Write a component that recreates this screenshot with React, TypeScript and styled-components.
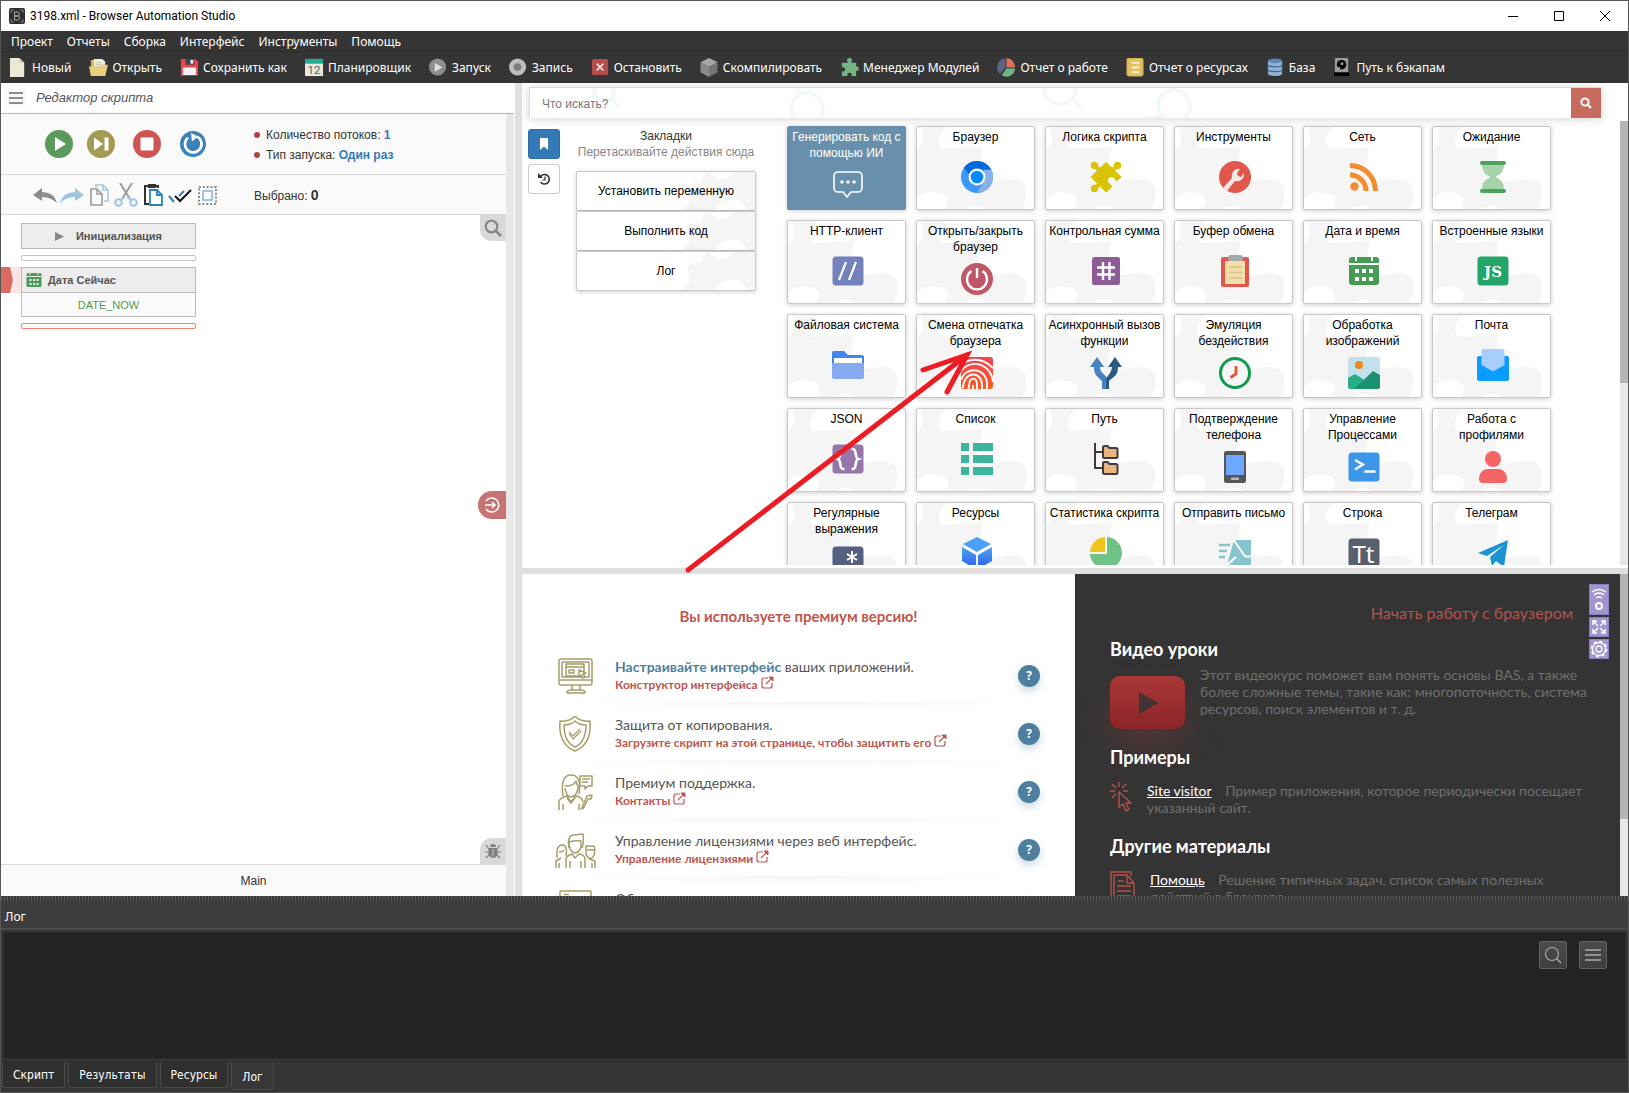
import React from 'react';
import styled, { createGlobalStyle, css } from 'styled-components';

const ui = '"Noto Sans", "Open Sans", sans-serif';
const sans = '"Liberation Sans", Arial, sans-serif';
const lato = 'Lato, sans-serif';

const Global = createGlobalStyle`
  * { box-sizing: border-box; }
  body { margin: 0; background: #353535; }
  button { font: inherit; color: inherit; padding: 0; border: 0; background: none; cursor: pointer; }
  svg { display: block; flex: none; }
  h1, h2, p, ul { margin: 0; padding: 0; }
  ul { list-style: none; }
`;

/* ---------- window frame ---------- */

const Window = styled.div`
  position: relative;
  height: 100vh;
  display: flex;
  flex-direction: column;
  overflow: hidden;
  border: 1px solid #565656;
  background: #353535;
  font-family: ${sans};
  font-size: 12px;
`;
const TitleBar = styled.header`
  flex: none;
  height: 30px;
  display: flex;
  align-items: center;
  padding-left: 8px;
  background: #fff;
  color: #000;
`;
const WindowTitle = styled.h1`
  flex: 1;
  margin-left: 5px;
  font: 400 12px/16px Roboto, ${ui};
`;
const FrameButton = styled.button`
  width: 46px;
  height: 30px;
  display: grid;
  place-items: center;
`;
const MenuBar = styled.nav`
  flex: none;
  height: 21px;
  display: flex;
  align-items: center;
  gap: 14px;
  padding: 2px 0 0 10px;
  border-bottom: 1px solid #2c2c2c;
  color: #fff;
  font: 12px/18px ${ui};
`;
const ToolBar = styled.div`
  flex: none;
  height: 31px;
  display: flex;
  align-items: center;
  gap: 18px;
  padding-left: 8px;
  color: #fff;
  font: 12px/18px ${ui};
`;
const ToolButton = styled.button`
  display: flex;
  align-items: center;
  gap: 4px;
  white-space: nowrap;
`;
const Workspace = styled.main`
  position: relative;
  flex: 1;
  min-height: 0;
  display: flex;
  background: #fff;
`;

/* ---------- script editor ---------- */

const EditorPanel = styled.section`
  flex: none;
  width: 514px;
  display: flex;
  flex-direction: column;
  padding-right: 1px;
  color: #333;
`;
const EditorHeader = styled.div`
  flex: none;
  height: 31px;
  display: flex;
  align-items: center;
  gap: 10px;
  padding-left: 5px;
  border-bottom: 1px solid #b5b5b5;
  font: italic 13px/20px ${sans};
  color: #555;
`;
const Burger = styled.button`
  width: 20px;
  height: 20px;
  display: grid;
  place-items: center;
  background: #fafafa;
`;
const EditorBody = styled.div`
  position: relative;
  flex: 1;
  min-height: 0;
  display: flex;
  flex-direction: column;
  border-right: 8px solid #e8e8e8;
`;
const ControlRow = styled.div<{ $tall?: boolean }>`
  flex: none;
  height: ${(p) => (p.$tall ? 61 : 40)}px;
  display: grid;
  grid-template-columns: 253px 1fr;
  align-items: center;
  background: #fafafa;
  border-bottom: 1px solid #d9d9d9;
`;
const RunButtons = styled.div`
  display: flex;
  align-items: center;
  gap: 18px;
  padding-left: 44px;
`;
const RunPair = styled.div`
  display: flex;
  gap: 14px;
`;
const EditButtons = styled.div`
  display: flex;
  gap: 3px;
  padding-left: 32px;
`;
const IconButton = styled.button`
  display: grid;
  place-items: center;
`;
const RunInfo = styled.ul`
  padding-top: 2px;
  line-height: 20px;
`;
const RunInfoItem = styled.li`
  display: flex;
  align-items: center;
  gap: 6px;
  &::before {
    content: '';
    width: 6px;
    height: 6px;
    border-radius: 50%;
    background: #b0413e;
  }
  b { color: #337ab7; }
`;
const Selected = styled.div`
  b { font-size: 14px; }
`;
const Canvas = styled.div`
  position: relative;
  flex: 1;
  min-height: 0;
  padding: 8px 0 0 20px;
  background: #fff;
`;
const Block = styled.div`
  width: 175px;
  border: 1px solid #bcbcbc;
  background: #ededed;
  color: #555;
`;
const BlockHead = styled.div<{ $center?: boolean }>`
  height: 24px;
  display: flex;
  align-items: center;
  ${(p) => (p.$center ? css`justify-content: center; gap: 12px;` : css`padding-left: 4px; gap: 6px;`)}
  font-weight: 700;
  font-size: 11px;
`;
const BlockBody = styled.div`
  height: 24px;
  border-top: 1px solid #bcbcbc;
  background: #fafafa;
  color: #4f9a52;
  text-align: center;
  font-size: 11px;
  line-height: 24px;
`;
const DropLine = styled.div<{ $active?: boolean }>`
  width: 175px;
  height: 6px;
  margin: 6px 0;
  border: 1px solid ${(p) => (p.$active ? '#f28076' : '#c4c4c4')};
  border-radius: 2px;
  background: #fff;
`;
const MarkedRow = styled.div`
  display: flex;
  margin-left: -20px;
`;
const Marker = styled.div`
  width: 20px;
  height: 26px;
  background: #f9e6e4;
`;
const SideTab = styled.button<{ $at: 'top' | 'middle' | 'bottom' }>`
  position: absolute;
  right: 0;
  display: grid;
  place-items: center;
  width: 26px;
  height: 26px;
  background: #d9d9d9;
  ${(p) => p.$at === 'top' && css`top: 0; border-bottom-left-radius: 12px;`}
  ${(p) => p.$at === 'bottom' && css`bottom: 0; border-top-left-radius: 12px;`}
  ${(p) => p.$at === 'middle' && css`
    top: calc(50% - 14px);
    width: 28px;
    height: 28px;
    background: #c77374;
    border-radius: 14px 0 0 14px;
  `}
`;
const FunctionBar = styled.button`
  flex: none;
  height: 32px;
  border-top: 1px solid #d9d9d9;
  background: #fafafa;
  text-align: center;
`;
const Splitter = styled.div<{ $horizontal?: boolean }>`
  flex: none;
  background: #e0e0e0;
  ${(p) => (p.$horizontal ? css`height: 6px;` : css`width: 7px;`)}
`;

/* ---------- action catalogue ---------- */

const RightSide = styled.div`
  flex: 1;
  min-width: 0;
  display: flex;
  flex-direction: column;
`;
const Catalogue = styled.section`
  flex: 484 1 0;
  min-height: 0;
  display: flex;
  flex-direction: column;
  padding-bottom: 3px;
  background: #fff;
`;
const SearchForm = styled.form`
  position: relative;
  z-index: 1;
  flex: none;
  display: flex;
  height: 31px;
  margin: 4px 27px 0 7px;
  border-top: 1px solid #dcdcdc;
  border-left: 1px solid #dcdcdc;
  background: #fff;
  box-shadow: 0 1px 10px rgba(0, 0, 0, 0.18);
`;
const SearchArt = styled.svg`
  position: absolute;
  inset: 0;
  pointer-events: none;
`;
const SearchInput = styled.input`
  position: relative;
  flex: 1;
  min-width: 0;
  padding: 2px 12px 0;
  border: 0;
  outline: 0;
  background: transparent;
  font: 12px ${sans};
  &::placeholder { color: #777; opacity: 1; }
`;
const SearchButton = styled.button`
  position: relative;
  width: 30px;
  display: grid;
  place-items: center;
  background: #c76b5f;
`;
const CatalogueBody = styled.div`
  flex: 1;
  min-height: 0;
  display: flex;
  padding-top: 3px;
  overflow: hidden;
`;
const SideModes = styled.div`
  flex: none;
  display: flex;
  flex-direction: column;
  gap: 5px;
  padding: 8px 0 0 6px;
`;
const ModeButton = styled.button<{ $on?: boolean }>`
  width: 32px;
  height: 30px;
  display: grid;
  place-items: center;
  border: 1px solid ${(p) => (p.$on ? '#2e6da4' : '#ccc')};
  border-radius: 3px;
  background: ${(p) => (p.$on ? '#337ab7' : '#fff')};
`;
const Bookmarks = styled.div`
  flex: none;
  width: 180px;
  margin: 7px 31px 0 16px;
  text-align: center;
  white-space: nowrap;
  line-height: 16px;
  color: #333;
`;
const Hint = styled.p`
  display: flex;
  justify-content: center;
  color: #888;
`;
const BookmarkList = styled.div`
  margin-top: 11px;
`;
const BookmarkItem = styled.button`
  position: relative;
  display: block;
  width: 180px;
  height: 40px;
  border: 1px solid #c8c8c8;
  border-radius: 2px;
  background: #fff;
  color: #000;
  box-shadow: 0 1px 4px rgba(0, 0, 0, 0.2);
`;
const Tiles = styled.div`
  flex: 1;
  align-self: flex-start;
  display: grid;
  grid-template-columns: repeat(auto-fill, 119px);
  grid-auto-rows: 84px;
  gap: 10px;
  padding-top: 5px;
`;
const Tile = styled.button<{ $accent?: boolean }>`
  position: relative;
  display: flex;
  flex-direction: column;
  align-items: center;
  padding: 2px 0 1px;
  border: 1px solid ${(p) => (p.$accent ? '#688fab' : '#c8c8c8')};
  border-radius: 2px;
  background: ${(p) => (p.$accent ? '#688fab' : '#fff')};
  color: ${(p) => (p.$accent ? '#fff' : '#000')};
  box-shadow: 0 1px 5px rgba(0, 0, 0, 0.2);
`;
const Backdrop = styled.svg`
  position: absolute;
  inset: 0;
  width: 100%;
  height: 100%;
`;
const TileName = styled.span`
  position: relative;
  line-height: 16px;
  text-align: center;
  white-space: pre-line;
`;
const TileIcon = styled.span`
  position: relative;
  flex: 1;
  display: flex;
  align-items: center;
  padding-left: 2px;
`;
const ScrollTrack = styled.div<{ $thumb: number }>`
  flex: none;
  width: 8px;
  background: linear-gradient(#b5b5b5 ${(p) => p.$thumb}%, #e8e8e8 ${(p) => p.$thumb}%);
`;

/* ---------- start page ---------- */

const StartPage = styled.section`
  flex: 323 1 0;
  min-height: 0;
  display: grid;
  grid-template: minmax(0, 1fr) / minmax(0, 553fr) minmax(0, 545fr) 8px;
  overflow: hidden;
`;
const Premium = styled.div`
  overflow: hidden;
  padding: 32px 35px 0;
  background: #fff;
  font-family: ${lato};
`;
const PremiumTitle = styled.h2`
  margin-bottom: 18px;
  text-align: center;
  font: 700 15px/20px ${lato};
  color: #c0554d;
`;
const Feature = styled.div`
  height: 58px;
  display: grid;
  grid-template-columns: 36px 1fr 22px;
  column-gap: 22px;
  align-items: center;
  justify-items: center;
  padding-top: 6px;
  color: #555;
  font-size: 14px;
  line-height: 18px;
  background: radial-gradient(50% 8px at 50% 0, rgba(0, 0, 0, 0.04), transparent);
  &:first-of-type { background: none; }
`;
const FeatureText = styled.div`
  justify-self: stretch;
  padding-bottom: 2px;
  b { color: #4f7f9f; }
`;
const FeatureLink = styled.a`
  display: flex;
  gap: 3px;
  font-weight: 700;
  font-size: 12px;
  line-height: 17px;
  color: #c0554d;
  text-decoration: none;
`;
const HelpButton = styled.button`
  width: 22px;
  height: 22px;
  border-radius: 50%;
  background: #4f7f9f;
  box-shadow: 0 4px 8px rgba(79, 127, 159, 0.3);
  color: #fff;
  font: 700 12px/22px "Open Sans", sans-serif;
`;
const Learn = styled.div`
  position: relative;
  overflow: hidden;
  padding: 29px 25px 0 35px;
  background: #343434;
  color: #6f6f6f;
  font: 14px/17px ${lato};
`;
const StartLink = styled.a`
  display: block;
  margin: 0 22px 15px 0;
  text-align: right;
  font-size: 16px;
  line-height: 20px;
  color: #b5524b;
  text-decoration: none;
`;
const LearnTitle = styled.h2`
  position: relative;
  z-index: 1;
  font: 700 18px/22px ${lato};
  color: #fff;
`;
const VideoRow = styled.div`
  display: flex;
  align-items: flex-start;
  gap: 15px;
  height: 62px;
  margin: 6px 0 18px;
`;
const VideoButton = styled.button`
  flex: none;
  width: 75px;
  height: 53px;
  margin-top: 10px;
  display: grid;
  place-items: center;
  border-radius: 10px;
  background: linear-gradient(#aa3836, #8a2528);
  box-shadow: 0 20px 36px rgba(170, 56, 54, 0.25);
`;
const LearnItem = styled.div`
  display: flex;
  align-items: flex-start;
  gap: 15px;
  margin: 14px 0 19px;
  a { margin-right: 10px; color: #fff; }
`;
const BrowserTools = styled.div`
  position: absolute;
  top: 10px;
  right: 11px;
  display: flex;
  flex-direction: column;
  gap: 2px;
`;
const BrowserTool = styled.button<{ $tall?: boolean }>`
  width: 20px;
  height: ${(p) => (p.$tall ? 31 : 20)}px;
  display: grid;
  place-items: center;
  background: #a294cf;
  border: 1px solid #8d7fc0;
`;

/* ---------- log ---------- */

const DockHandle = styled.div`
  flex: none;
  height: 5px;
  background: repeating-linear-gradient(90deg, #5a5a5a 0 1px, #383838 1px 3px);
`;
const LogTitle = styled.h2`
  flex: none;
  height: 29px;
  padding: 6px 4px 0;
  border-bottom: 2px solid #4b4b4b;
  background: #3d3d3d;
  color: #fff;
  font: 12px/20px ${ui};
`;
const LogView = styled.div`
  flex: none;
  height: 127px;
  margin: 2px;
  display: flex;
  justify-content: flex-end;
  align-items: flex-start;
  gap: 12px;
  padding: 8px 18px;
  border: 1px solid #2c2c2c;
  background: #232323;
`;
const LogButton = styled.button`
  width: 28px;
  height: 28px;
  display: grid;
  place-items: center;
  border: 1px solid #626262;
  border-radius: 2px;
  background: linear-gradient(#4c4c4c, #3e3e3e);
`;
const Tabs = styled.div`
  flex: none;
  height: 31px;
  display: flex;
  align-items: flex-start;
  gap: 3px;
  padding: 0 1px;
  border-top: 1px solid #2c2c2c;
  color: #fff;
  font: 12px/24px "DejaVu Sans Condensed", ${ui};
`;
const Tab = styled.button<{ $on?: boolean }>`
  height: ${(p) => (p.$on ? 28 : 26)}px;
  padding: ${(p) => (p.$on ? '2px 10px 0' : '0 10px')};
  border: 1px solid #4a4a4a;
  border-top: 0;
  border-radius: 0 0 3px 3px;
  background: ${(p) => (p.$on ? '#373737' : '#2f2f2f')};
`;
const Arrow = styled.svg`
  position: absolute;
  left: 679px;
  top: 260px;
  pointer-events: none;
`;

/* ---------- toolbar icons (20 × 20) ---------- */

const Ico = ({ s = 20, w = s, box = 20, children }: { s?: number; w?: number; box?: number; children: React.ReactNode }) => (
  <svg width={w} height={s} viewBox={`0 0 ${(box * w) / s} ${box}`} fill="none" aria-hidden="true">{children}</svg>
);
const gear = 'M8 4a2.500 2.500 0 1 1 4 0v1h5v4a2.300 2.300 0 1 1 0 4.500V19h-5a2.300 2.300 0 1 0-4 0H2v-5a2.300 2.300 0 1 0 0-4V5h6z';
const tools: [string, React.ReactNode][] = [
  ['Новый', <><path d="M1 0h10l5 5v15H1z" fill="#ece8d6" /><path d="M11 0v5h5z" fill="#cfc9ad" /></>],
  ['Открыть', <><path d="M2 2h5l2 2h8v15H2z" fill="#d3b45f" /><path d="M5 1h9l3 3v12H5z" fill="#efecdc" /><path d="M7 5h6M7 7h7M7 9h7" stroke="#c8c2a4" /><path d="M0 9h13l2-2h5l-3 12H2z" fill="#e9cf7c" /></>],
  ['Сохранить как', <><path d="M1 1h15l3 3v15H1z" fill="#ef4343" /><path d="M6 1h9v6H6z" fill="#33475b" /><path d="M11 2h3v4h-3z" fill="#eee" /><path d="M3 10h14v8H3z" fill="#f6f1f1" /><path d="M1 18h18v1H1z" fill="#c02f2f" /></>],
  ['Планировщик', <><path d="M0 1h19v18H0z" fill="#e9e7d8" /><path d="M0 1h19v5H0z" fill="#1fae92" /><text x="9.5" y="17" textAnchor="middle" fontFamily="Roboto" fontSize="12" fill="#56646f">12</text></>],
  ['Запуск', <><circle cx="9" cy="9.500" r="9" fill="#8f8f8f" /><path d="M6 5l8 5-8 4.500z" fill="#ddd" /></>],
  ['Запись', <><circle cx="9" cy="9.500" r="9" fill="#bdbdbd" /><circle cx="9" cy="9.500" r="4" fill="#7d7d7d" /></>],
  ['Остановить', <><rect x="1" y="1" width="17" height="17" rx="2" fill="#b64b4c" /><path d="M6 6l7 7M13 6l-7 7" stroke="#eedada" strokeWidth="2" /></>],
  ['Скомпилировать', <><path d="M9.500 0l9 4.500-9 5-9-5z" fill="#a6a6a6" /><path d="M.5 4.500l9 5V20l-9-5z" fill="#8b8b8b" /><path d="M18.500 4.500l-9 5V20l9-5z" fill="#757575" /></>],
  ['Менеджер Модулей', <path d={gear} fill="#72b583" />],
  ['Отчет о работе', <><path d="M9 10V0a10 10 0 0 0-6 17z" fill="#5c6380" /><path d="M10 0a9 10 0 0 1 9 10h-9z" fill="#e0705a" /><path d="M10 11h9a9 9 0 0 1-14 7z" fill="#6fb584" /></>],
  ['Отчет о ресурсах', <><rect x="1" y="0" width="17" height="19" rx="2" fill="#e3c062" stroke="#c9a94f" /><path d="M6 5h8M6 10h8M6 15h8" stroke="#f8efcf" strokeWidth="2" /></>],
  ['База', <><path d="M2 3v13c0 4 15 4 15 0V3z" fill="#8fb1d3" /><ellipse cx="9.500" cy="3" rx="7.500" ry="2.500" fill="#5e87b3" /><path d="M2 7c0 3 15 3 15 0M2 12c0 3 15 3 15 0" stroke="#3f6289" strokeWidth="1.300" /></>],
  ['Путь к бэкапам', <><rect x="2" y="0" width="14" height="19" rx="1" fill="#9a9a9a" /><path d="M1 15h16v4H1z" fill="#000" /><circle cx="9" cy="7" r="5" fill="#000" /><circle cx="9.500" cy="6" r="1.500" fill="#9a9a9a" /><path d="M4 9l4 1-2 5-2-1z" fill="#9a9a9a" /></>],
];

/* ---------- catalogue icons (32 × 32) ---------- */

const Badge = ({ fill, y = 1.5, children }: { fill: string; y?: number; children: React.ReactNode }) => (
  <><rect x="0.500" y={y} width="31" height={32 - 2 * y} rx="3.500" fill={fill} />{children}</>
);
const glyph = { fill: '#fff', textAnchor: 'middle' as const };

const tiles: [string, React.ReactNode][] = [
  ['Генерировать код с\nпомощью ИИ', <g stroke="#fff" strokeWidth="1.600"><path d="M6 3h20a4 4 0 0 1 4 4v12a4 4 0 0 1-4 4h-7l-4 5-4-5H6a4 4 0 0 1-4-4V7a4 4 0 0 1 4-4z" /><g fill="#fff" stroke="none"><circle cx="10" cy="13" r="1.800" /><circle cx="16" cy="13" r="1.800" /><circle cx="22" cy="13" r="1.800" /></g></g>],
  ['Браузер', <><circle cx="16" cy="16" r="16" fill="#3a99fb" /><path d="M16 0A16 16 0 0 1 30 8.500H16L8.500 14 3 6.500A16 16 0 0 1 16 0z" fill="#0069da" /><path d="M30.500 9A16 16 0 0 1 16 32l7-12V9z" fill="#86b1ea" /><circle cx="16" cy="16" r="8.500" fill="#fff" /><circle cx="16" cy="16" r="6.300" fill="#0587ff" /></>],
  ['Логика скрипта', <g fill="#dac206"><path d="M5 5l7 6M27 5l-7 6M5 27l7-6" stroke="#dac206" strokeWidth="4" /><circle cx="4.500" cy="4.500" r="3.700" /><circle cx="27.500" cy="4.500" r="3.700" /><circle cx="4.500" cy="27.500" r="3.700" /><path d="M16 1.500L22 7l4 4 5 5-4.500 4-1.700-2.500a4 4 0 1 0-4.500 6l1.700 2L16 31l-5.500-5.500L6 21l-5-5 5-5 4.500-4z" stroke="#dac206" strokeLinejoin="round" /></g>],
  ['Инструменты', <><circle cx="16" cy="16" r="16" fill="#e2574c" /><path d="M4 27l9-10a7 7 0 0 1 8-9l-3 4 1 3 3 1 3-4a7 7 0 0 1-9 8L8 30z" fill="#efe9e6" /></>],
  ['Сеть', <g stroke="#f28d2f" strokeWidth="5"><path d="M2 4.500a25.500 25.500 0 0 1 25.500 25.500M2 14a16 16 0 0 1 16 16" /><circle cx="6.500" cy="25.500" r="4.200" fill="#f28d2f" stroke="none" /></g>],
  ['Ожидание', <><path d="M5 3h22c0 8-4 11-8 12.500v1c4 1.500 8 4.500 8 12.500H5c0-8 4-11 8-12.500v-1C9 14 5 11 5 3z" fill="#a7d3aa" /><path d="M5 2h22M5 30h22" stroke="#4fa25c" strokeWidth="4" strokeLinecap="round" /></>],
  ['HTTP-клиент', <Badge fill="#7381bd"><path d="M7 25L14 7M17 25l7-18" stroke="#fff" strokeWidth="2.200" /></Badge>],
  ['Открыть/закрыть\nбраузер', <><circle cx="16" cy="16" r="16" fill="#c05766" /><path d="M10.500 8a10 10 0 1 0 11 0M16 5v10" stroke="#fff" strokeWidth="2.400" /></>],
  ['Контрольная сумма', <><rect x="2" y="2" width="28" height="28" rx="2.500" fill="#8d5b96" /><path d="M13 7v18M19.500 7v18M7 12.500h18M7 19.500h18" stroke="#fff" strokeWidth="2.400" /></>],
  ['Буфер обмена', <><rect x="2" y="2" width="28" height="30" rx="2" fill="#e2574c" /><path d="M6 6h20v23H6z" fill="#f2dfa9" /><rect x="9" y="0" width="15" height="6" rx="2.500" fill="#a6a9ab" /><path d="M10 12h13M10 17.500h13M10 23h13" stroke="#d9c28c" strokeWidth="1.600" /></>],
  ['Дата и время', <><path d="M1 8V5a3 3 0 0 1 3-3h3v4h2V2h14v4h2V2h3a3 3 0 0 1 3 3v3zM1 10h30v17a3 3 0 0 1-3 3H4a3 3 0 0 1-3-3z" fill="#479b55" /><g fill="#fff"><path d="M7 14h4v4H7zM14 14h4v4h-4zM21 14h4v4h-4zM7 22h4v4H7zM14 22h4v4h-4zM21 22h4v4h-4z" /></g></>],
  ['Встроенные языки', <Badge fill="#22a567"><text x="16" y="21.500" {...glyph} fontFamily="DejaVu Serif" fontWeight="700" fontSize="15">JS</text></Badge>],
  ['Файловая система', <><path d="M0 4a2 2 0 0 1 2-2h10l4 4h14a2 2 0 0 1 2 2v8H0z" fill="#4285eb" /><path d="M2 9h28v8H2z" fill="#fff" /><path d="M0 14h32v14a2 2 0 0 1-2 2H2a2 2 0 0 1-2-2z" fill="#86aaee" /></>],
  ['Смена отпечатка\nбраузера', <><defs><linearGradient id="fp" x2="0" y2="1"><stop stopColor="#ef4652" /><stop offset="1" stopColor="#fb5a1f" /></linearGradient><clipPath id="fpc"><rect width="32" height="32" rx="3" /></clipPath></defs><g clipPath="url(#fpc)"><path d="M0 0h32v32H0z" fill="url(#fp)" /><g stroke="#fff" strokeWidth="1.900"><path d="M0 7Q18-3 32 11" /><path d="M0 14Q8 4 20 8q11 5 12 17" /><path d="M0 23c5-15 26-12 26 4v6" /><path d="M2 31c1-18 19-17 19-3v5" /><path d="M7 33c1-2 1-3 1-5 1-9 8-8 8 0v5" /><path d="M12 33v-5" /></g></g></>],
  ['Асинхронный вызов\nфункции', <><path d="M7 0l7 10h-4c0 7 6 6 9 15v7h-7v-8C7 19 4 18 4 10H0z" fill="#4583c4" /><path d="M25 0l7 10h-4c0 9-4 9-9 14v8h-3v-8c-1-4 5-6 6-14h-4z" fill="#2b5a86" /></>],
  ['Эмуляция\nбездействия', <><circle cx="16" cy="16" r="14.500" fill="#f5f5f5" stroke="#119a4d" strokeWidth="3" /><path d="M17 9v8l-5.500 3.500" stroke="#dd5436" strokeWidth="2.800" /></>],
  ['Обработка\nизображений', <><rect width="32" height="32" rx="3" fill="#c3e1ed" /><circle cx="11" cy="8" r="4" fill="#ee8a18" /><path d="M0 21l7-4 8 5v10H2a2 2 0 0 1-2-2z" fill="#27ae89" /><path d="M6 32l19-18 7 4v12a2 2 0 0 1-2 2z" fill="#1c9171" /></>],
  ['Почта', <><path d="M0 9a2 2 0 0 1 2-2h28a2 2 0 0 1 2 2v21a2 2 0 0 1-2 2H2a2 2 0 0 1-2-2z" fill="#0a9dff" /><path d="M4.500 2a2 2 0 0 1 2-2h19a2 2 0 0 1 2 2v14L16 22.500 4.500 16z" fill="#a7ceff" /></>],
  ['JSON', <Badge fill="#9675ab"><path d="M12.500 6H11c-4 0-1.500 9-5 10 3.500 1 1 10 5 10h1.500M19.500 6H21c4 0 1.500 9 5 10-3.500 1-1 10-5 10h-1.500" stroke="#fff" strokeWidth="2.600" /></Badge>],
  ['Список', <path d="M0 0h8v8H0zM12 0h20v8H12zM0 12h8v8H0zM12 12h20v8H12zM0 24h8v8H0zM12 24h20v8H12z" fill="#3cb59d" />],
  ['Путь', <g stroke="#423840" strokeWidth="2" strokeLinejoin="round"><path d="M5 0v25h8M5 9h8" /><path d="M13 4.500q0-1.500 1.500-1.500h3l2 2H26q1.500 0 1.500 1.500v7q0 1.500-1.500 1.500H14.500q-1.500 0-1.500-1.500zM13 20.500q0-1.500 1.500-1.500h3l2 2H26q1.500 0 1.500 1.500v7q0 1.500-1.500 1.500H14.500q-1.500 0-1.500-1.500z" fill="#e9b47e" /></g>],
  ['Подтверждение\nтелефона', <><rect x="5" width="22" height="32" rx="2.500" fill="#535759" /><path d="M7 4h18v20H7z" fill="#6ea8fc" /><rect x="12" y="26.500" width="8" height="2.500" rx="1" fill="#bfb8b3" /></>],
  ['Управление\nПроцессами', <Badge fill="#3c97e8"><path d="M7 9l8 4.500-8 5M16.500 20.500h11" stroke="#fff" strokeWidth="2.400" /></Badge>],
  ['Работа с\nпрофилями', <><circle cx="16" cy="8" r="8" fill="#f66565" /><path d="M2 28c0-7 5-10 9-10h10c4 0 9 3 9 10q0 4-4 4H6q-4 0-4-4z" fill="#f66565" /></>],
  ['Регулярные\nвыражения', <Badge fill="#556080"><path d="M20 6v12M15 9l10 6M25 9l-10 6" stroke="#fff" strokeWidth="2" /></Badge>],
  ['Ресурсы', <><defs><linearGradient id="cube" x2="0" y2="1"><stop stopColor="#4da3f5" /><stop offset="1" stopColor="#2e5fe8" /></linearGradient></defs><path d="M16 0l14 7-14 8L2 7z" fill="#4aa0f5" /><path d="M1 10l14 8v14L1 24zM31 10l-14 8v14l14-8z" fill="url(#cube)" /></>],
  ['Статистика скрипта', <><path d="M17 0a16 16 0 1 1-17 17h17z" fill="#71c285" /><path d="M15 0v15H0A16 16 0 0 1 15 0z" fill="#f1c41b" /></>],
  ['Отправить письмо', <><path d="M15 3h17v25H8z" fill="#86c5cd" /><path d="M14 2l11 16q2 3 7 1M8 28l9-8" stroke="#fff" strokeWidth="2" /><path d="M0 8h11M0 14h8M0 20h6" stroke="#86c5cd" strokeWidth="2.400" /></>],
  ['Строка', <Badge fill="#58606e"><text x="15.500" y="26" {...glyph} fontFamily="Noto Sans" fontSize="24">Tt</text></Badge>],
  ['Телеграм', <><path d="M1 16L31 3l-4 27-8-6-4 5-2-9 14-12-17 11z" fill="#1d93d2" /></>],
];

/* ---------- premium feature drawings ---------- */

const olive = { stroke: '#a59f6a', strokeWidth: 1.5, strokeLinejoin: 'round' as const, fill: 'none' };

type FeatureRow = { art: React.ReactNode; w: number; text: React.ReactNode; link: string };
const features: FeatureRow[] = [
  {
    w: 35, text: <><b>Настраивайте интерфейс</b> ваших приложений.</>, link: 'Конструктор интерфейса',
    art: <g {...olive}><rect x="1" y="1" width="33" height="26" rx="2" /><path d="M1 22h33M4 4h27v15H4zM8 6h18v12H8zM8 9h18M11 12h5v3h-5zM14 27v5M22 27v5M9 35q0-3 4-3h10q4 0 4 3z" /><path d="M21 12l7 3-3 1 2 3-2 1-2-3-2 2z" fill="#fff" /></g>,
  },
  {
    w: 32, text: 'Защита от копирования.', link: 'Загрузите скрипт на этой странице, чтобы защитить его',
    art: <g {...olive}><path d="M16 0q5 6 15 5 2 23-15 30Q-1 28 1 5q10 1 15-5z" /><path d="M16 5q4 4 11 4 0 17-11 22Q5 26 5 9q7 0 11-4z" /><path d="M10 18l4 5 8-8M10 16l4 4 7-7" strokeWidth="1.200" /></g>,
  },
  {
    w: 35, text: 'Премиум поддержка.', link: 'Контакты',
    art: <g {...olive}><path d="M5 22Q2 1 13 1t8 19M7 12q9 0 11-5 1 4 2 5 0 10-7 11-5-1-6-9M1 36v-9q2-4 8-5l4 6 5-6q6 1 7 6M5 36v-6M21 36v-6" /><path d="M22 2h12v10h-4l-3 3v-3h-5zM24 5h8M24 8h6M23 36l6-14 5-1-1 4h-3l-5 10M9 24l4 5 4-5" /></g>,
  },
  {
    w: 41, text: 'Управление лицензиями через веб интерфейс.', link: 'Управление лицензиями',
    art: <g {...olive}><path d="M14 16q-2-12 4-13l10-1q1 8-1 14M14 10q6-2 12-1 1 11-6 12-6-1-6-11zM11 36V26q2-3 6-4l3 4 4-4q6 1 6 5v9M15 36v-7M26 36v-7" /><path d="M2 26q-1-13 5-13t4 11M4 20q4 0 5-2M1 36v-7l5-3M4 36v-5M31 22v-8h8q2 6-1 11-4 4-7-3zM32 18h7M34 27l6 2v7M37 36v-5" /></g>,
  },
  {
    w: 33, text: 'Обновления скриптов.', link: 'Менеджер скриптов',
    art: <g {...olive}><rect x="1" y="1" width="31" height="30" rx="1" /><path d="M1 8h31M5 4.500h5" /></g>,
  },
];

const ExternalIcon = () => (
  <svg width="13" height="13" viewBox="0 0 13 13" fill="none" stroke="#c0554d" aria-hidden="true">
    <path d="M7 2H3Q1 2 1 4v6q0 2 2 2h6q2 0 2-2V7M5 8l6-6" strokeWidth="1.200" /><path d="M8 1h4v4z" fill="#c0554d" />
  </svg>
);

const PuzzleBackdrop = () => (
  <Backdrop viewBox="0 0 117 82" aria-hidden="true">
    <path d="M5 0h24q-12 14-4 22 18-1 40-2 0 8-4 26 0 10 12 9 6-2 12-2 20-4 24 8 2 12-4 21H68q-8-7-20 0H28Q38 66 14 65 6 66 0 71V23q9-7 5-17z" fill="#f5f5f5" />
  </Backdrop>
);
const BookmarkBackdrop = () => (
  <Backdrop viewBox="0 0 178 38" aria-hidden="true">
    <path d="M178 0v38h-7q-10-17-30-5l-3 5h-33q12-8 5-22 3-6 14-6 3-10 9-10 9 14 24 0z" fill="#f5f5f5" />
  </Backdrop>
);

const bookmarks = ['Установить переменную', 'Выполнить код', 'Лог'];

export default function App() {
  return (
    <Window>
      <Global />
      <TitleBar>
        <Ico s={16} box={16}><rect width="16" height="16" rx="2" fill="#2b2b2b" /><path d="M2 5V2h3M11 2h3v3M14 11v3h-3M5 14H2v-3" stroke="#888" /><path d="M5.500 4h4q2 2 0 4h-4h4q3 2 0 4h-4z" stroke="#aaa" /></Ico>
        <WindowTitle>3198.xml - Browser Automation Studio</WindowTitle>
        <FrameButton aria-label="Свернуть"><Ico s={12} box={12}><path d="M1 6.500h10" stroke="#000" /></Ico></FrameButton>
        <FrameButton aria-label="Развернуть"><Ico s={12} box={12}><path d="M1.500 1.500h9v9h-9z" stroke="#000" /></Ico></FrameButton>
        <FrameButton aria-label="Закрыть"><Ico s={12} box={12}><path d="M1 1l10 10M11 1L1 11" stroke="#000" /></Ico></FrameButton>
      </TitleBar>
      <MenuBar>
        {['Проект', 'Отчеты', 'Сборка', 'Интерфейс', 'Инструменты', 'Помощь'].map((m) => <button key={m}>{m}</button>)}
      </MenuBar>
      <ToolBar>
        {tools.map(([name, art]) => <ToolButton key={name}><Ico s={19}>{art}</Ico>{name}</ToolButton>)}
      </ToolBar>

      <Workspace>
        <EditorPanel>
          <EditorHeader>
            <Burger aria-label="Меню"><Ico s={14} box={14}><path d="M0 2h14M0 7h14M0 12h14" stroke="#8c8c8c" strokeWidth="2" /></Ico></Burger>
            Редактор скрипта
          </EditorHeader>
          <EditorBody>
            <ControlRow $tall>
              <RunButtons>
                <RunPair>
                  <IconButton aria-label="Запустить"><Ico s={28} box={28}><circle cx="14" cy="14" r="14" fill="#5b9a5b" /><path d="M10 7l11 7-11 7z" fill="#fff" /></Ico></IconButton>
                  <IconButton aria-label="Шаг"><Ico s={28} box={28}><circle cx="14" cy="14" r="14" fill="#a39b52" /><path d="M7 7.500l9 6.500-9 6.500zM17.500 7.500h4v13h-4z" fill="#fff" /></Ico></IconButton>
                </RunPair>
                <IconButton aria-label="Стоп"><Ico s={28} box={28}><circle cx="14" cy="14" r="14" fill="#cf5553" /><rect x="7.500" y="7.500" width="13" height="13" rx="1" fill="#fff" /></Ico></IconButton>
                <IconButton aria-label="Перезапуск"><Ico s={28} box={28}><circle cx="14" cy="14" r="13" fill="#3b82b8" /><path d="M9 7.700a8.300 8.300 0 1 0 9 -1" stroke="#fff" strokeWidth="2.600" /><path d="M12 3l7 3.500-6 5z" fill="#fff" /></Ico></IconButton>
              </RunButtons>
              <RunInfo>
                <RunInfoItem><span>Количество потоков: <b>1</b></span></RunInfoItem>
                <RunInfoItem><span>Тип запуска: <b>Один раз</b></span></RunInfoItem>
              </RunInfo>
            </ControlRow>
            <ControlRow>
              <EditButtons>
                <IconButton aria-label="Отменить"><Ico s={24} box={24}><path d="M9 5v4q12 0 15 11-6-6-15-6v4L0 12z" fill="#8c8c8c" /></Ico></IconButton>
                <IconButton aria-label="Повторить"><Ico s={24} box={24}><path d="M15 5v4Q3 9 0 20q6-6 15-6v4l9-6z" fill="#9dc6e0" /></Ico></IconButton>
                <IconButton aria-label="Копировать"><Ico s={24} box={24}><path d="M9 5V2h7l5 5v11h-4M16 2v5h5" stroke="#a5cbe2" strokeWidth="1.600" /><path d="M4 6h6l5 5v11H4zM10 6v5h5" stroke="#9b9b9b" strokeWidth="1.600" /></Ico></IconButton>
                <IconButton aria-label="Вырезать"><Ico s={24} box={24}><path d="M6 0l10 16M18 0L8 16" stroke="#9b9b9b" strokeWidth="2" /><g stroke="#9dc6e0" strokeWidth="2"><circle cx="4.500" cy="19.500" r="3.300" /><circle cx="19.500" cy="19.500" r="3.300" /><path d="M7 17l4-3M17 17l-4-3" /></g></Ico></IconButton>
                <IconButton aria-label="Вставить"><Ico s={24} box={24}><path d="M8 21H4V3h13v2" stroke="#333" strokeWidth="2" /><path d="M7 1h8v4H7z" fill="#333" /><path d="M9 7h7l5 5v10H9zM16 7v5h5" stroke="#2f80b8" strokeWidth="1.800" fill="#fff" /></Ico></IconButton>
                <IconButton aria-label="Выделить все"><Ico s={24} box={24}><path d="M1 13l5 6M11 13l5-5" stroke="#2f80b8" strokeWidth="2" /><path d="M7 13l5 5L23 7" stroke="#111" strokeWidth="2" /></Ico></IconButton>
                <IconButton aria-label="Снять выделение"><Ico s={24} box={24}><rect x="4" y="4" width="17" height="17" stroke="#8c8c8c" strokeWidth="2" strokeDasharray="2 1.800" /><rect x="8" y="8" width="9" height="9" stroke="#9dc6e0" strokeWidth="2" /></Ico></IconButton>
              </EditButtons>
              <Selected>Выбрано: <b>0</b></Selected>
            </ControlRow>
            <Canvas>
              <Block>
                <BlockHead $center><Ico s={9} box={9}><path d="M0 0l9 4.500L0 9z" fill="#888" /></Ico>Инициализация</BlockHead>
              </Block>
              <DropLine />
              <MarkedRow>
                <Marker><Ico s={26} w={13} box={26}><path d="M0 0h9l3 13-3 13H0z" fill="#dc6a60" /></Ico></Marker>
                <Block>
                  <BlockHead><Ico s={16} box={32}>{tiles[10][1]}</Ico>Дата Сейчас</BlockHead>
                  <BlockBody>DATE_NOW</BlockBody>
                </Block>
              </MarkedRow>
              <DropLine $active />
              <SideTab $at="top" aria-label="Поиск"><Ico s={18} box={18}><circle cx="7.500" cy="7.500" r="5.800" stroke="#888" strokeWidth="2.200" /><path d="M12 12l5 5" stroke="#888" strokeWidth="2.600" /></Ico></SideTab>
              <SideTab $at="bottom" aria-label="Отладка"><Ico s={16} box={16}><path d="M5 4a3 3 0 0 1 6 0zM3.500 5h9v6q-1 4-4.500 4t-4.500-4z" fill="#808080" /><path d="M1 2l3 4M15 2l-3 4M0 9h16M1 15l4-4M15 15l-4-4" stroke="#808080" strokeWidth="1.200" /><path d="M8 6v8" stroke="#ccc" /></Ico></SideTab>
            </Canvas>
            <FunctionBar>Main</FunctionBar>
            <SideTab $at="middle" aria-label="Показать"><Ico s={18} box={18}><path d="M3 5a7 7 0 1 1 0 8M2 9h10M9 6l3 3-3 3" stroke="#fff" strokeWidth="1.600" /></Ico></SideTab>
          </EditorBody>
        </EditorPanel>
        <Splitter />

        <RightSide>
          <Catalogue>
            <SearchForm onSubmit={(e) => e.preventDefault()}>
              <SearchArt width="100%" height="30" fill="none" stroke="#f3f8fb" strokeWidth="4" aria-hidden="true">
                <circle cx="74" cy="4" r="10" /><path d="M81 11l8 7" />
                <circle cx="277" cy="21" r="16" /><path d="M270 6l-4-9" />
                <circle cx="530" cy="0" r="16" /><path d="M541 10l11 9" />
                <circle cx="644" cy="18" r="16" /><path d="M630 28l-16 3" />
              </SearchArt>
              <SearchInput aria-label="Что искать?" placeholder="Что искать?" />
              <SearchButton aria-label="Найти"><Ico s={12} box={12}><circle cx="5" cy="5" r="3.600" stroke="#fff" strokeWidth="2" /><path d="M7.500 7.500L11 11" stroke="#fff" strokeWidth="2.200" /></Ico></SearchButton>
            </SearchForm>
            <CatalogueBody>
              <SideModes>
                <ModeButton $on aria-label="Закладки"><Ico s={12} box={12}><path d="M2 0h8v12L6 8.500 2 12z" fill="#fff" /></Ico></ModeButton>
                <ModeButton aria-label="История"><Ico s={12} box={12}><path d="M2.500 3.500A4.800 4.800 0 1 1 2.500 9" stroke="#333" strokeWidth="1.600" /><path d="M0 0l5 5H0z" fill="#333" /><path d="M7 3.500V7H4.500" stroke="#333" strokeWidth="1.200" /></Ico></ModeButton>
              </SideModes>
              <Bookmarks>
                <p>Закладки</p>
                <Hint>Перетаскивайте действия сюда</Hint>
                <BookmarkList>
                  {bookmarks.map((b) => <BookmarkItem key={b}><BookmarkBackdrop /><TileName>{b}</TileName></BookmarkItem>)}
                </BookmarkList>
              </Bookmarks>
              <Tiles>
                {tiles.map(([name, art], i) => (
                  <Tile key={name} $accent={i === 0}>
                    {i > 0 && <PuzzleBackdrop />}
                    <TileName>{name}</TileName>
                    <TileIcon><Ico s={32} box={32}>{art}</Ico></TileIcon>
                  </Tile>
                ))}
              </Tiles>
              <ScrollTrack $thumb={59} />
            </CatalogueBody>
          </Catalogue>
          <Splitter $horizontal />
          <StartPage>
            <Premium>
              <PremiumTitle>Вы используете премиум версию!</PremiumTitle>
              {features.map((f) => (
                <Feature key={f.link}>
                  <Ico s={36} w={f.w} box={36}>{f.art}</Ico>
                  <FeatureText>{f.text}<FeatureLink href="#">{f.link}<ExternalIcon /></FeatureLink></FeatureText>
                  <HelpButton>?</HelpButton>
                </Feature>
              ))}
            </Premium>
            <Learn>
              <StartLink href="#">Начать работу с браузером</StartLink>
              <LearnTitle>Видео уроки</LearnTitle>
              <VideoRow>
                <VideoButton aria-label="Смотреть"><Ico s={22} box={22}><path d="M2 0l19 11L2 22z" fill="#403435" /></Ico></VideoButton>
                <p>Этот видеокурс поможет вам понять основы BAS, а также более сложные темы, такие как: многопоточность, система ресурсов, поиск элементов и т. д.</p>
              </VideoRow>
              <LearnTitle>Примеры</LearnTitle>
              <LearnItem>
                <Ico s={30} w={22} box={30}><path d="M9 10v15l4-3 3 7 3-2-3-6h5zM9 0v5M0 9h5M13 9h5M2 2l4 4M16 2l-4 4M2 16l4-4" stroke="#b5524b" strokeWidth="1.400" /></Ico>
                <p><a href="#">Site visitor</a> Пример приложения, которое периодически посещает указанный сайт.</p>
              </LearnItem>
              <LearnTitle>Другие материалы</LearnTitle>
              <LearnItem>
                <Ico s={32} w={25} box={32}><path d="M1 32V1h20v4M4 32V4h13l7 8v20M17 4v8h7M8 10h6M7 15h14M7 20h14M7 25h14" stroke="#b5524b" strokeWidth="1.400" /></Ico>
                <p><a href="#">Помощь</a> Решение типичных задач, список самых полезных действий в браузере.</p>
              </LearnItem>
              <BrowserTools>
                <BrowserTool $tall aria-label="Сеть"><Ico s={27} w={18} box={27}><path d="M2 6q7-5 14 0M4 9q5-4 10 0M6 12q3-2 6 0" stroke="#fff" strokeWidth="1.500" /><circle cx="9" cy="20" r="3" stroke="#fff" strokeWidth="2" /></Ico></BrowserTool>
                <BrowserTool aria-label="Во весь экран"><Ico s={16} box={16}><path d="M2 6V2h4M10 2h4v4M14 10v4h-4M6 14H2v-4M2 2l5 5M14 2L9 7M14 14L9 9M2 14l5-5" stroke="#fff" strokeWidth="1.500" /></Ico></BrowserTool>
                <BrowserTool aria-label="Настройки"><Ico s={18} box={18}><circle cx="9" cy="9" r="6.500" stroke="#fff" strokeWidth="1.300" /><circle cx="9" cy="9" r="7.600" stroke="#fff" strokeWidth="1.600" strokeDasharray="3 3" /><circle cx="9" cy="9" r="3" stroke="#fff" strokeWidth="1.400" /></Ico></BrowserTool>
              </BrowserTools>
            </Learn>
            <ScrollTrack $thumb={76} />
          </StartPage>
        </RightSide>
        <Arrow width="300" height="240" viewBox="680 343 300 240" fill="none" stroke="#ed1c24" strokeWidth="5" strokeLinecap="round" aria-hidden="true">
          <path d="M688 570L967 355M923 370l44-15-20 37" />
        </Arrow>
      </Workspace>

      <DockHandle />
      <LogTitle>Лог</LogTitle>
      <LogView>
        <LogButton aria-label="Поиск в логе"><Ico s={18} box={18}><circle cx="8" cy="8" r="6.500" stroke="#aaa" strokeWidth="1.200" /><path d="M13 13l4 4" stroke="#aaa" strokeWidth="1.400" /></Ico></LogButton>
        <LogButton aria-label="Меню лога"><Ico s={18} box={18}><path d="M1 4h16M1 9h16M1 14h16" stroke="#aaa" strokeWidth="1.400" /></Ico></LogButton>
      </LogView>
      <Tabs role="tablist">
        {['Скрипт', 'Результаты', 'Ресурсы', 'Лог'].map((t) => <Tab key={t} role="tab" $on={t === 'Лог'}>{t}</Tab>)}
      </Tabs>
    </Window>
  );
}
